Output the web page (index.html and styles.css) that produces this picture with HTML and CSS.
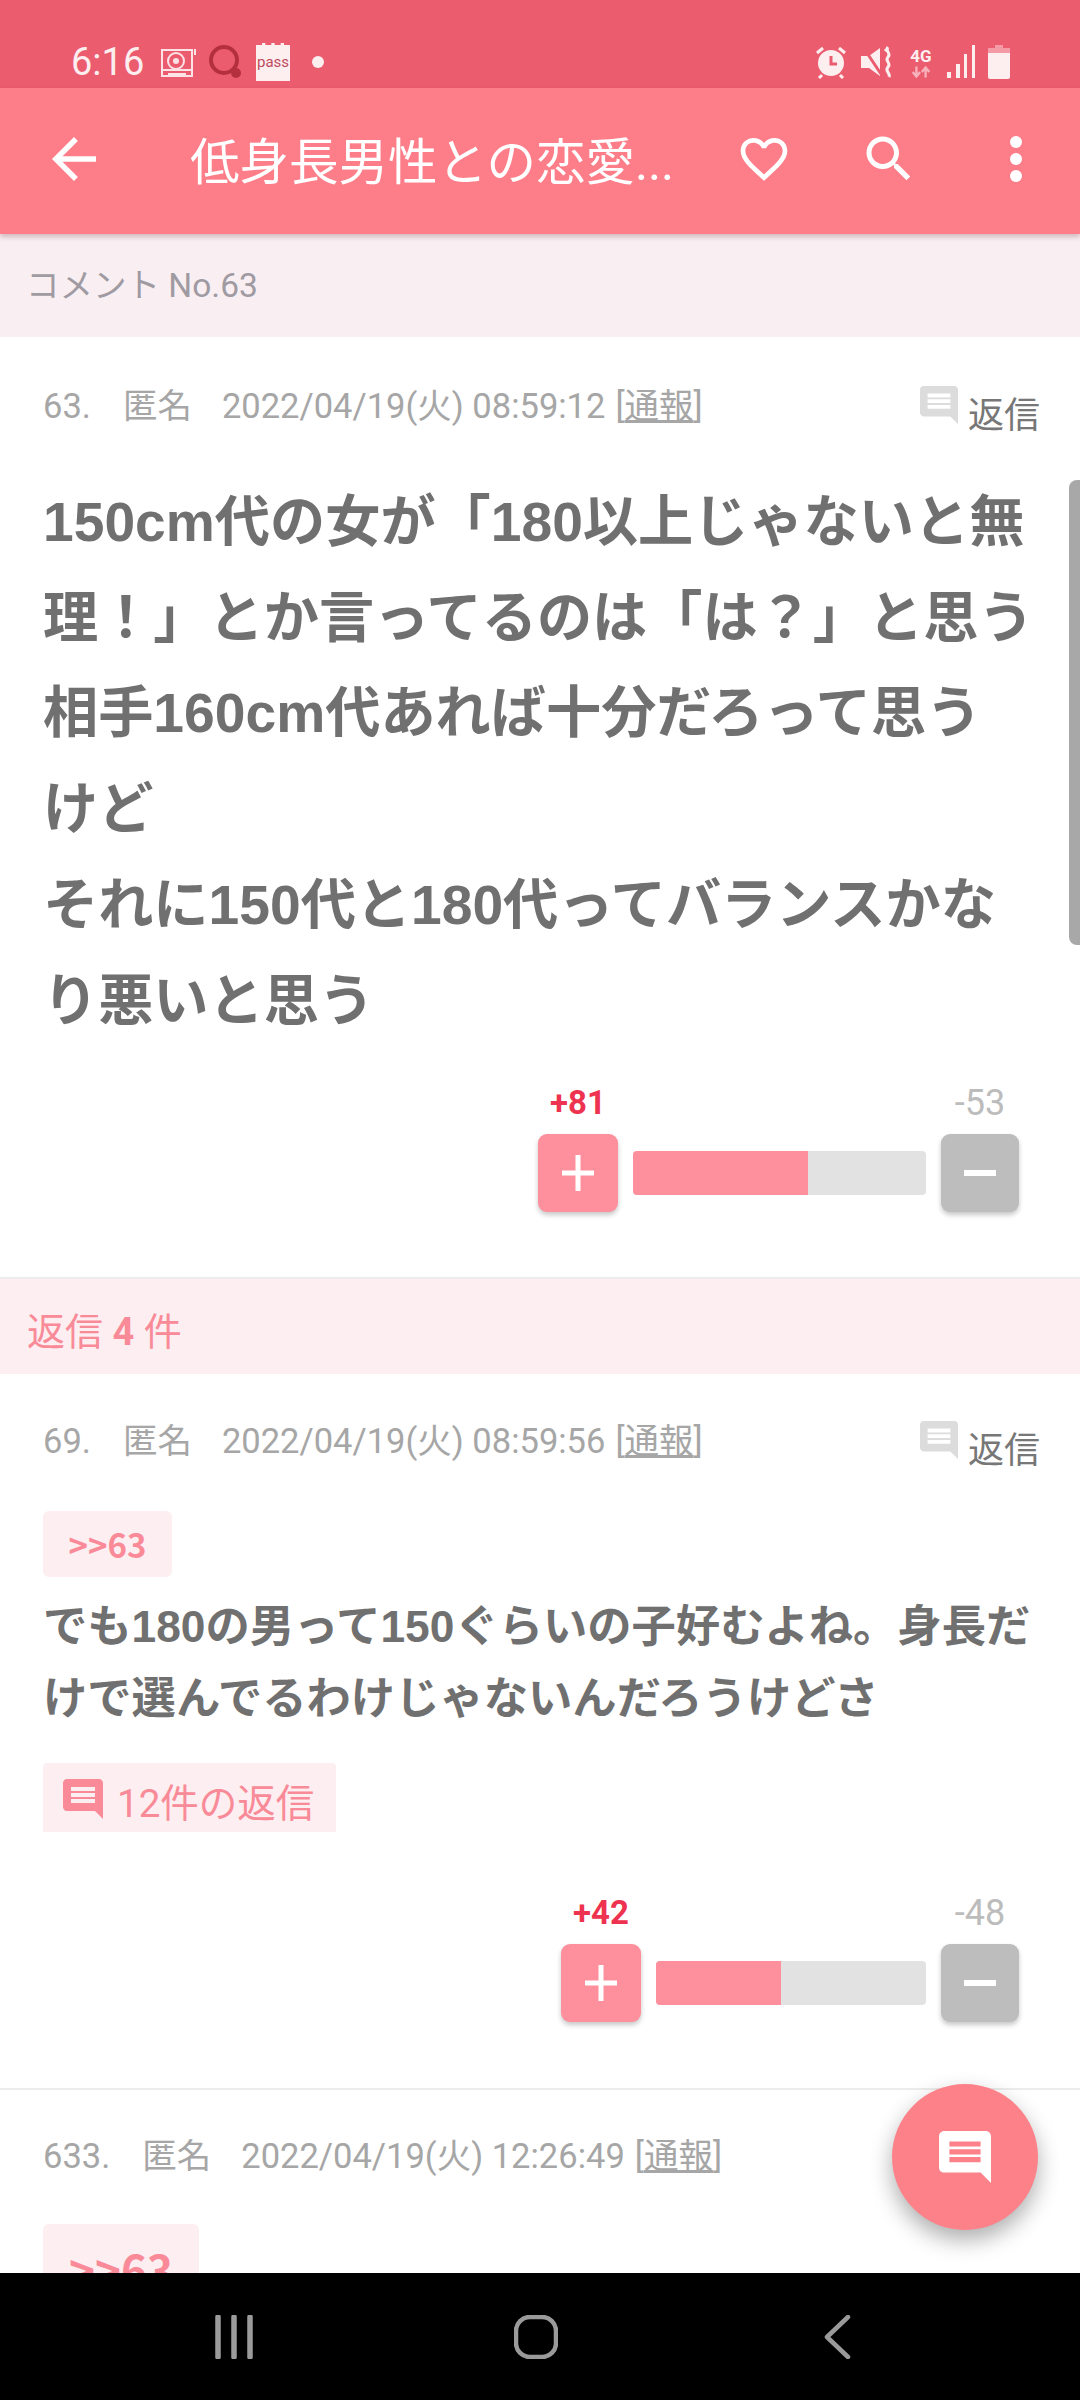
FILE: index.html
```html
<!DOCTYPE html>
<html lang="ja">
<head>
<meta charset="utf-8">
<title>コメント No.63</title>
<link rel="stylesheet" href="styles.css">
</head>
<body>
<div class="screen">
  <div class="statusbar">
    <div class="status-left">
      <span class="clock">6:16</span>
      <svg class="ntf ntf-cam" viewBox="0 0 36 36"><rect x="2" y="6" width="30" height="26" fill="none" stroke="#fde3e6" stroke-width="2"/><circle cx="16" cy="17" r="8" fill="none" stroke="#fde3e6" stroke-width="2"/><circle cx="16" cy="17" r="3" fill="#fde3e6"/><path d="M2 26h30M8 30h18" stroke="#fde3e6" stroke-width="2"/><path d="M35 5v6" stroke="#fde3e6" stroke-width="2"/></svg>
      <svg class="ntf ntf-q" viewBox="0 0 36 36"><circle cx="16" cy="16" r="13" fill="none" stroke="#b5303f" stroke-width="4"/><circle cx="28" cy="29" r="5" fill="#b5303f"/></svg>
      <span class="pass">pass</span>
      <span class="ntf-dot"></span>
    </div>
    <div class="status-right">
      <svg class="st st-alarm" viewBox="0 0 34 34"><circle cx="17" cy="18" r="13" fill="#fdeef0"/><path d="M3 8l6-5M31 8l-6-5M8 30l-3 3M26 30l3 3" stroke="#fdeef0" stroke-width="3"/><path d="M17 11v8h6" fill="none" stroke="#ea5c6e" stroke-width="3"/></svg>
      <svg class="st st-mute" viewBox="0 0 34 34"><path d="M1 11h8l11-8v28L9 23H1z" fill="#fdeef0"/><path d="M3 2l20 30" stroke="#ea5c6e" stroke-width="3"/><path d="M25 6l3-3M28 2c-4 4 4 6 0 10s4 6 0 10 3 6 1 10" fill="none" stroke="#fdeef0" stroke-width="3"/></svg>
      <span class="net"><span class="net-label">4G</span><svg class="net-arrows" viewBox="0 0 24 12"><path d="M7 0v10M3 6l4 5 4-5M17 12V2M13 6l4-5 4 5" fill="none" stroke="#f7b3bc" stroke-width="2.500"/></svg></span>
      <svg class="st st-signal" viewBox="0 0 30 33"><path d="M1 27h4v6H1zM10 19h4v14h-4zM18 9h3v24h-3zM26 0h3v33h-3z" fill="#fdeef0"/></svg>
      <svg class="st st-batt" viewBox="0 0 22 34"><path d="M7 0h8v3H7zM0 3h22v5H0z" fill="#f39aa6"/><path d="M0 8h22v24a2 2 0 0 1-2 2H2a2 2 0 0 1-2-2z" fill="#fdeef0"/></svg>
    </div>
  </div>

  <header class="appbar">
    <svg class="ab-icon ab-back" viewBox="0 0 24 24"><path d="M20 11H7.830l5.590-5.590L12 4l-8 8 8 8 1.410-1.410L7.830 13H20v-2z"/></svg>
    <h1 class="ab-title">低身長男性との恋愛...</h1>
    <svg class="ab-icon ab-heart" viewBox="0 0 24 24"><path d="M16.5 3c-1.74 0-3.41.81-4.5 2.09C10.91 3.81 9.24 3 7.5 3 4.42 3 2 5.42 2 8.5c0 3.78 3.4 6.86 8.55 11.54L12 21.35l1.45-1.32C18.6 15.36 22 12.28 22 8.5 22 5.42 19.58 3 16.5 3zm-4.4 15.55l-.1.1-.1-.1C7.14 14.24 4 11.39 4 8.5 4 6.5 5.5 5 7.5 5c1.54 0 3.04.99 3.57 2.36h1.87C13.46 5.99 14.96 5 16.5 5c2 0 3.5 1.5 3.5 3.5 0 2.89-3.14 5.74-7.9 10.05z"/></svg>
    <svg class="ab-icon ab-search" viewBox="0 0 24 24"><path d="M15.5 14h-.79l-.28-.27C15.41 12.59 16 11.11 16 9.5 16 5.91 13.09 3 9.5 3S3 5.91 3 9.5 5.91 16 9.5 16c1.61 0 3.09-.59 4.23-1.57l.27.28v.79l5 4.99L20.49 19l-4.99-5zm-6 0C7.01 14 5 11.99 5 9.5S7.01 5 9.5 5 14 7.01 14 9.5 11.99 14 9.5 14z"/></svg>
    <svg class="ab-icon ab-more" viewBox="0 0 12 46"><circle cx="6" cy="6" r="6"/><circle cx="6" cy="23" r="6"/><circle cx="6" cy="40" r="6"/></svg>
  </header>

  <main class="content">
    <div class="page-label">コメント No.63</div>

    <article class="comment comment-main">
      <div class="meta">
        <span class="meta-no">63.</span><span class="meta-name">匿名</span><span class="meta-date">2022/04/19(火) 08:59:12</span><span class="meta-report">[<u>通報</u>]</span>
        <span class="reply-link"><svg class="reply-icon" viewBox="2 2 20 20"><path d="M20 2H4c-1.1 0-2 .9-2 2v12c0 1.1.9 2 2 2h14l4 4V4c0-1.100-.9-2-2-2zm-2 12H6v-2h12v2zm0-3H6V9h12v2zm0-3H6V6h12v2z"/></svg><span class="reply-text">返信</span></span>
      </div>
      <p class="body-large">150cm代の女が「180以上じゃないと無理！」とか言ってるのは「は？」と思う<br>相手160cm代あれば十分だろって思う<br>けど<br>それに150代と180代ってバランスかなり悪いと思う</p>
      <div class="vote">
        <span class="count-plus">+81</span><span class="count-minus">-53</span>
        <span class="vote-btn btn-plus"><svg class="vote-sign" viewBox="0 0 32 36"><path d="M0 15.500h32v5H0zM13.500 0h5v36h-5z"/></svg></span>
        <span class="bar" style="width:293px"><span class="bar-fill" style="width:175px"></span></span>
        <span class="vote-btn btn-minus"><svg class="vote-sign" viewBox="0 0 32 36"><path d="M0 15h32v6H0z"/></svg></span>
      </div>
    </article>

    <div class="reply-count">返信 <b>4</b> 件</div>

    <article class="comment comment-reply">
      <div class="meta">
        <span class="meta-no">69.</span><span class="meta-name">匿名</span><span class="meta-date">2022/04/19(火) 08:59:56</span><span class="meta-report">[<u>通報</u>]</span>
        <span class="reply-link"><svg class="reply-icon" viewBox="2 2 20 20"><path d="M20 2H4c-1.1 0-2 .9-2 2v12c0 1.1.9 2 2 2h14l4 4V4c0-1.100-.9-2-2-2zm-2 12H6v-2h12v2zm0-3H6V9h12v2zm0-3H6V6h12v2z"/></svg><span class="reply-text">返信</span></span>
      </div>
      <div class="anchor">&gt;&gt;63</div>
      <p class="body-small">でも180の男って150ぐらいの子好むよね。身長だけで選んでるわけじゃないんだろうけどさ</p>
      <div class="thread"><svg class="thread-icon" viewBox="2 2 20 20"><path d="M20 2H4c-1.1 0-2 .9-2 2v12c0 1.1.9 2 2 2h14l4 4V4c0-1.100-.9-2-2-2zm-2 12H6v-2h12v2zm0-3H6V9h12v2zm0-3H6V6h12v2z"/></svg><span class="thread-text">12件の返信</span></div>
      <div class="vote">
        <span class="count-plus">+42</span><span class="count-minus">-48</span>
        <span class="vote-btn btn-plus"><svg class="vote-sign" viewBox="0 0 32 36"><path d="M0 15.500h32v5H0zM13.500 0h5v36h-5z"/></svg></span>
        <span class="bar" style="width:270px"><span class="bar-fill" style="width:125px"></span></span>
        <span class="vote-btn btn-minus"><svg class="vote-sign" viewBox="0 0 32 36"><path d="M0 15h32v6H0z"/></svg></span>
      </div>
    </article>

    <article class="comment comment-last">
      <div class="meta">
        <span class="meta-no">633.</span><span class="meta-name">匿名</span><span class="meta-date">2022/04/19(火) 12:26:49</span><span class="meta-report">[<u>通報</u>]</span>
      </div>
      <div class="anchor anchor-large">&gt;&gt;63</div>
    </article>

    <div class="scroll-thumb"></div>
    <button class="fab"><svg class="fab-icon" viewBox="2 2 20 20"><path d="M20 2H4c-1.1 0-2 .9-2 2v12c0 1.1.9 2 2 2h14l4 4V4c0-1.100-.9-2-2-2zm-2 12H6v-2h12v2zm0-3H6V9h12v2zm0-3H6V6h12v2z"/></svg></button>
  </main>

  <nav class="navbar">
    <svg class="nav-icon" viewBox="0 0 44 44"><path d="M6 2v40M22 2v40M38 2v40" stroke="#9a9a9a" stroke-width="5.500" stroke-linecap="round"/></svg>
    <svg class="nav-icon" viewBox="0 0 44 44"><rect x="2" y="2" width="40" height="40" rx="14" fill="none" stroke="#9a9a9a" stroke-width="4.500"/></svg>
    <svg class="nav-icon" viewBox="0 0 44 44"><path d="M32 2L11 22l21 20" fill="none" stroke="#9a9a9a" stroke-width="4.500" stroke-linecap="round" stroke-linejoin="round"/></svg>
  </nav>
</div>
</body>
</html>
```

FILE: styles.css
```css
* { box-sizing: border-box; }
html, body { margin: 0; padding: 0; }
body { font-family: Roboto, "Noto Sans CJK JP", sans-serif; background: #fff; }
.screen { width: 1080px; height: 2400px; display: flex; flex-direction: column; overflow: hidden; }

.statusbar { flex: 0 0 88px; background: #ea5c6e; display: flex; justify-content: space-between; align-items: center; padding: 41px 70px 6px 71px; color: #fdeef0; }
.status-left, .status-right { display: flex; align-items: center; }
.clock { font-size: 38px; line-height: 40px; width: 89px; }
.ntf { width: 36px; height: 36px; }
.ntf-cam { margin-right: 12px; }
.ntf-q { margin-right: 12px; }
.pass { width: 34px; height: 38px; background: #fdeef0; border-top: 2px dashed #ea5c6e; color: #bd4b5c; font-size: 15px; line-height: 34px; text-align: center; }
.ntf-dot { width: 12px; height: 12px; border-radius: 50%; background: #fdeef0; margin-left: 22px; }
.st { display: block; }
.st-alarm { width: 36px; height: 34px; margin-right: 10px; }
.st-mute { width: 36px; height: 34px; margin-right: 13px; }
.net { display: flex; flex-direction: column; align-items: center; width: 26px; margin-right: 12px; }
.net-label { font-size: 17px; font-weight: 700; line-height: 20px; }
.net-arrows { width: 22px; height: 12px; }
.st-signal { width: 30px; height: 33px; margin-right: 12px; }
.st-batt { width: 22px; height: 34px; }

.appbar { flex: 0 0 146px; background: #fd7e89; display: flex; align-items: center; position: relative; z-index: 2; box-shadow: 0 3px 5px rgba(120, 60, 70, .3); padding-bottom: 4px; }
.ab-icon { display: block; fill: #fff; }
.ab-back { width: 66px; height: 66px; margin-left: 41px; }
.ab-title { margin: 7px 0 0 83px; width: 500px; font-size: 49.500px; font-weight: 400; line-height: 60px; color: #fff; white-space: nowrap; }
.ab-heart { width: 56px; height: 56px; margin-left: 46px; }
.ab-search { width: 60px; height: 60px; margin-left: 67px; }
.ab-more { width: 12px; height: 46px; margin-left: 91px; }

.content { flex: 1; min-height: 0; overflow: hidden; position: relative; background: #fff; }
.page-label { height: 103px; background: #f9eff2; padding: 32px 0 0 26px; font-size: 33.500px; line-height: 40px; color: #a09aa2; }

.comment { padding-left: 43px; border-bottom: 2px solid #ececec; }
.comment-main { padding-top: 45px; padding-bottom: 65px; }
.comment-reply { padding-top: 43px; padding-bottom: 66px; }
.comment-last { padding-top: 42px; border-bottom: 0; }

.meta { display: flex; align-items: center; height: 48px; font-size: 34.500px; line-height: 48px; color: #a6a6a6; white-space: nowrap; position: relative; }
.meta-no { margin-right: 32px; }
.meta-name { margin-right: 30px; }
.meta-report { margin-left: 10px; }
.reply-link { position: absolute; right: 40px; top: 0; display: flex; align-items: flex-start; }
.reply-icon { width: 38px; height: 38px; fill: #dcdcdc; margin: 4px 10px 0 0; }
.reply-text { font-size: 36px; color: #777; line-height: 56px; margin-top: 6px; }

.body-large { margin: 45px 0 0; width: 1000px; font-family: "Liberation Sans", "Noto Sans CJK JP", sans-serif; font-size: 55.200px; font-weight: 700; line-height: 95.700px; color: #707070; }
.body-small { margin: 14px 0 0; width: 1000px; font-family: "Liberation Sans", "Noto Sans CJK JP", sans-serif; font-size: 44.300px; font-weight: 700; line-height: 72px; color: #707070; }

.anchor { margin-top: 46px; width: 129px; height: 66px; background: #fdeef1; border-radius: 6px; color: #fa8a98; font-family: "Noto Sans CJK JP", sans-serif; font-size: 33px; font-weight: 700; line-height: 66px; text-align: center; }
.anchor-large { margin-top: 44px; width: 156px; height: 90px; font-size: 44px; line-height: 90px; }

.thread { margin-top: 28px; width: 293px; height: 69px; background: #fdeef1; display: flex; align-items: center; padding-left: 20px; color: #f98a97; font-size: 38.500px; line-height: 69px; border-radius: 4px 4px 0 0; white-space: nowrap; }
.thread-icon { width: 40px; height: 40px; fill: #fa8a98; margin: 2px 14px 0 0; }
.thread-text { margin-top: 12px; }

.vote { display: grid; grid-template-columns: 80px auto 78px; column-gap: 15px; row-gap: 11px; justify-content: end; padding-right: 61px; margin-top: 34px; }
.comment-reply .vote { margin-top: 61px; }
.count-plus { grid-column: 1; grid-row: 1; text-align: center; font-size: 33px; font-weight: 700; line-height: 40px; color: #ee3350; }
.count-minus { grid-column: 3; grid-row: 1; text-align: center; font-size: 36px; line-height: 40px; color: #bcbcbc; }
.vote-btn { grid-row: 2; height: 78px; border-radius: 9px; display: flex; align-items: center; justify-content: center; box-shadow: 0 3px 5px rgba(0, 0, 0, .22); }
.btn-plus { grid-column: 1; background: #fe8f9c; }
.btn-minus { grid-column: 3; background: #bdbdbd; }
.vote-sign { width: 32px; height: 36px; fill: #fff; }
.bar { grid-column: 2; grid-row: 2; align-self: center; display: block; height: 44px; background: #e2e2e2; border-radius: 4px; overflow: hidden; }
.bar-fill { display: block; height: 100%; background: #fe8f9c; }

.reply-count { height: 95px; background: #fceef1; padding: 33px 0 0 27px; font-size: 38px; line-height: 40px; color: #f98a97; }

.scroll-thumb { position: absolute; right: 0; top: 246px; width: 11px; height: 465px; background: #a8a8a8; border-radius: 8px 0 0 8px; }
.fab { position: absolute; left: 892px; top: 1850px; width: 146px; height: 146px; border: 0; border-radius: 50%; background: #fd8189; box-shadow: 0 10px 22px rgba(0, 0, 0, .32); display: flex; align-items: center; justify-content: center; padding: 0; }
.fab-icon { width: 52px; height: 52px; fill: #fff; }

.navbar { flex: 0 0 127px; background: #000; display: flex; align-items: center; justify-content: space-between; padding: 0 220px 0 212px; }
.nav-icon { width: 44px; height: 44px; display: block; }
```
